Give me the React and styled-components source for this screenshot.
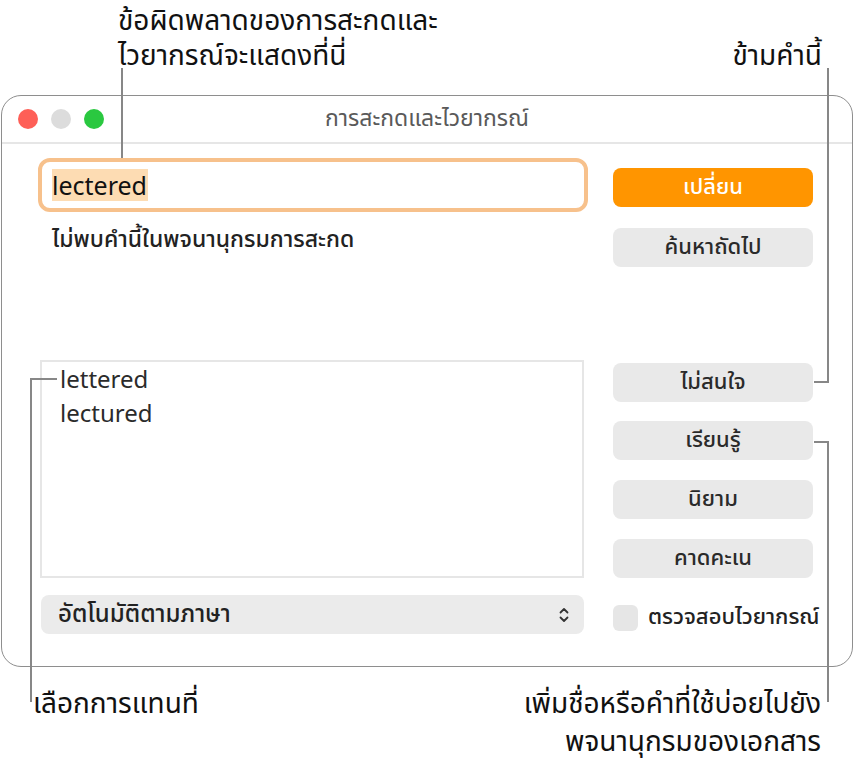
import React from 'react';
import styled, { createGlobalStyle } from 'styled-components';

const GlobalStyle = createGlobalStyle`
  html, body {
    margin: 0;
    padding: 0;
    background: #ffffff;
  }
  body {
    font-family: "Noto Sans Thai", "Noto Sans", "DejaVu Sans", sans-serif;
    color: #1d1d1d;
  }
`;

const Page = styled.div`
  position: relative;
  width: 854px;
  height: 769px;
  overflow: hidden;
`;

const TopNotes = styled.div`
  height: 95px;
  display: flex;
  justify-content: space-between;
  align-items: flex-start;
  padding: 4px 32px 0 118px;
  box-sizing: border-box;
  font-size: 28px;
  line-height: 35px;
  color: #111;
`;

const Note = styled.div`
  text-align: ${(p) => (p.right ? 'right' : 'left')};
  padding-top: ${(p) => p.drop || 0}px;
  white-space: nowrap;
`;

const Window = styled.div`
  margin: 0 1px;
  height: 572px;
  box-sizing: border-box;
  border: 1px solid #8e8e8e;
  border-radius: 20px;
  display: flex;
  flex-direction: column;
  overflow: hidden;
`;

const TitleBar = styled.div`
  height: 46px;
  flex-shrink: 0;
  display: flex;
  align-items: center;
  padding-left: 16px;
  border-bottom: 2px solid #e6e6e6;
  position: relative;
`;

const Lights = styled.div`
  display: flex;
  gap: 13px;
`;

const Light = styled.span`
  width: 20px;
  height: 20px;
  border-radius: 50%;
  background: ${(p) => p.color};
`;

const Title = styled.div`
  position: absolute;
  left: 0;
  right: 0;
  text-align: center;
  font-size: 23px;
  color: #5a5a5a;
`;

const Body = styled.div`
  flex: 1;
  display: flex;
  gap: 25px;
  padding: 14px 39px 0 36px;
`;

const LeftCol = styled.div`
  width: 550px;
  display: flex;
  flex-direction: column;
`;

const RightCol = styled.div`
  width: 200px;
  display: flex;
  flex-direction: column;
  padding-top: 10px;
`;

const TextField = styled.div`
  height: 54px;
  box-sizing: border-box;
  border: 4px solid #f7c18c;
  border-radius: 12px;
  display: flex;
  align-items: center;
  padding-left: 10px;
`;

const Selected = styled.span`
  background: #fddcb3;
  font-family: "Noto Sans", sans-serif;
  font-size: 25px;
  line-height: 32px;
  padding-right: 1px;
  color: #111;
`;

const Message = styled.div`
  margin: 16px 0 0 14px;
  font-size: 23px;
  font-weight: 500;
  line-height: 24px;
  color: #222;
`;

const List = styled.div`
  margin: 108px 4px 0 2px;
  height: 218px;
  box-sizing: border-box;
  border: 2px solid #e6e6e6;
  padding: 0 0 0 18px;
`;

const ListItem = styled.div`
  font-family: "Noto Sans", sans-serif;
  font-size: 24px;
  line-height: 34px;
  color: #2b2b2b;
`;

const Popup = styled.div`
  margin: 17px 4px 0 3px;
  height: 39px;
  border-radius: 8px;
  background: #ebebeb;
  display: flex;
  align-items: center;
  justify-content: space-between;
  padding: 0 14px 0 17px;
  font-size: 24px;
  font-weight: 500;
  color: #222;
`;

const Button = styled.div`
  height: 39px;
  flex-shrink: 0;
  margin-top: ${(p) => p.gap || 0}px;
  border-radius: 8px;
  background: ${(p) => (p.primary ? '#ff9500' : '#e9e9e9')};
  color: ${(p) => (p.primary ? '#ffffff' : '#2a2a2a')};
  display: flex;
  align-items: center;
  justify-content: center;
  font-size: 22px;
  font-weight: 500;
`;

const CheckRow = styled.label`
  margin-top: 23px;
  display: flex;
  align-items: center;
  gap: 10px;
  font-size: 22px;
  font-weight: 500;
  color: #222;
  white-space: nowrap;
`;

const Box = styled.span`
  width: 25px;
  height: 26px;
  border-radius: 6px;
  background: #e6e6e6;
  flex-shrink: 0;
`;

const BottomNotes = styled.div`
  display: flex;
  justify-content: space-between;
  padding: 19px 33px 0 33px;
  font-size: 28px;
  line-height: 38px;
  color: #111;
`;

const Leaders = styled.svg`
  position: absolute;
  left: 0;
  top: 0;
  pointer-events: none;
`;

function Chevrons() {
  return (
    <svg width="12" height="18" viewBox="0 0 12 18" fill="none" stroke="#333" strokeWidth="1.8" strokeLinecap="round" strokeLinejoin="round">
      <path d="M2.5 6.5 L6 3 L9.5 6.5" />
      <path d="M2.5 11.5 L6 15 L9.5 11.5" />
    </svg>
  );
}

export default function App() {
  return (
    <Page>
      <GlobalStyle />
      <TopNotes>
        <Note>
          ข้อผิดพลาดของการสะกดและ
          <br />
          ไวยากรณ์จะแสดงที่นี่
        </Note>
        <Note right drop={35}>ข้ามคำนี้</Note>
      </TopNotes>

      <Window>
        <TitleBar>
          <Lights>
            <Light color="#fe5f57" />
            <Light color="#dcdcdc" />
            <Light color="#2ac840" />
          </Lights>
          <Title>การสะกดและไวยากรณ์</Title>
        </TitleBar>
        <Body>
          <LeftCol>
            <TextField>
              <Selected>lectered</Selected>
            </TextField>
            <Message>ไม่พบคำนี้ในพจนานุกรมการสะกด</Message>
            <List>
              <ListItem>lettered</ListItem>
              <ListItem>lectured</ListItem>
            </List>
            <Popup>
              <span>อัตโนมัติตามภาษา</span>
              <Chevrons />
            </Popup>
          </LeftCol>
          <RightCol>
            <Button primary>เปลี่ยน</Button>
            <Button gap={21}>ค้นหาถัดไป</Button>
            <Button gap={96}>ไม่สนใจ</Button>
            <Button gap={19}>เรียนรู้</Button>
            <Button gap={20}>นิยาม</Button>
            <Button gap={20}>คาดคะเน</Button>
            <CheckRow>
              <Box />
              ตรวจสอบไวยากรณ์
            </CheckRow>
          </RightCol>
        </Body>
      </Window>

      <BottomNotes>
        <Note>เลือกการแทนที่</Note>
        <Note right>
          เพิ่มชื่อหรือคำที่ใช้บ่อยไปยัง
          <br />
          พจนานุกรมของเอกสาร
        </Note>
      </BottomNotes>

      <Leaders width="854" height="769" viewBox="0 0 854 769" fill="none" stroke="#878787" strokeWidth="2">
        <path d="M122 68 V158" />
        <path d="M828 68 V382 H814" />
        <path d="M814 442 H828 V702" />
        <path d="M57 379 H31 V702" />
      </Leaders>
    </Page>
  );
}
